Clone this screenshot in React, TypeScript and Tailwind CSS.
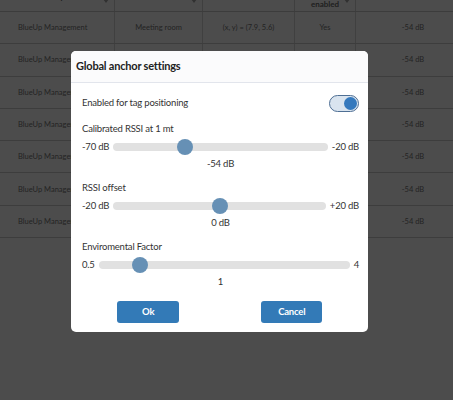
import React, { useState } from 'react';

const font = { fontFamily: 'Lato, "Open Sans", sans-serif' };

const rows = Array.from({ length: 7 }, (_, i) => ({
  map: 'BlueUp Management',
  zone: i === 0 ? 'Meeting room' : '',
  position: i === 0 ? '(x, y) = (7.9, 5.6)' : '',
  enabled: i === 0 ? 'Yes' : '',
  rssi: '-54 dB',
}));

function SortArrow() {
  return (
    <svg width="6" height="4" viewBox="0 0 6 4" className="absolute right-[5px] top-[16px]">
      <path d="M0 0h6L3 4z" fill="#a5a5a5" />
    </svg>
  );
}

function Background() {
  const cols = 'grid grid-cols-[115px_88px_92px_61px_130px]';
  return (
    <div className="w-[486px] text-[#777] text-[7.5px]" style={font}>
      <div className={`${cols} -mt-[17px] h-[29px] border-b border-[#c9c9c9] text-[#6a6a6a] font-bold text-[8px]`}>
        <div className="relative flex items-center justify-center border-r border-[#d2d2d2]">Map<SortArrow /></div>
        <div className="relative flex items-center justify-center border-r border-[#d2d2d2]">Zone<SortArrow /></div>
        <div className="flex items-center justify-center border-r border-[#d2d2d2]">Position</div>
        <div className="relative flex flex-col items-center justify-center leading-[12px] pt-[2px] border-r border-[#d2d2d2]">
          <span>Tag positioning</span>
          <span>enabled</span>
          <SortArrow />
        </div>
        <div className="flex items-center justify-center">Calibrated RSSI at 1 mt</div>
      </div>
      {rows.map((r, i) => (
        <div key={i} className={`${cols} h-[32.3px] border-b border-[#cdcdcd]`}>
          <div className="flex items-center pl-[18px] border-r border-[#d6d6d6]">{r.map}</div>
          <div className="flex items-center justify-center border-r border-[#d6d6d6]">{r.zone}</div>
          <div className="flex items-center justify-center border-r border-[#d6d6d6]">{r.position}</div>
          <div className="flex items-center justify-center border-r border-[#d6d6d6]">{r.enabled}</div>
          <div className="flex items-center justify-center pr-[16px]">{r.rssi}</div>
        </div>
      ))}
    </div>
  );
}

function Toggle({ on, onChange }: { on: boolean; onChange: (v: boolean) => void }) {
  return (
    <button
      type="button"
      onClick={() => onChange(!on)}
      className={`flex items-center w-[30px] h-[17px] rounded-full border-[1.5px] border-[#4f6f94] bg-[#d9e4ef] px-[1px] ${on ? 'justify-end' : 'justify-start'}`}
    >
      <span className="block w-[13px] h-[13px] rounded-full bg-[#3579bd]" />
    </button>
  );
}

interface SliderProps {
  label: string;
  min: number;
  max: number;
  value: number;
  left: string;
  right: string;
  display: string;
}

function Slider({ label, min, max, value, left, right, display }: SliderProps) {
  const frac = (value - min) / (max - min);
  return (
    <div className="mt-[10px]">
      <div className="h-[14px] leading-[14px]">{label}</div>
      <div className="mt-[3px] h-[16px] flex items-center gap-[4px]">
        <span>{left}</span>
        <div className="relative flex-1 h-[8px] rounded-full bg-[#e1e1e1]">
          <span
            className="absolute top-[-4px] w-[16px] h-[16px] rounded-full bg-[#6690b5]"
            style={{ left: `calc(${frac} * (100% - 16px))` }}
          />
        </div>
        <span>{right}</span>
      </div>
      <div className="mt-[2px] h-[14px] leading-[14px] text-center">{display}</div>
    </div>
  );
}

export default function App() {
  const [enabled, setEnabled] = useState(true);
  return (
    <div className="relative w-full h-[400px] overflow-hidden bg-white">
      <Background />
      <div className="absolute inset-0 bg-black/70" />
      <div
        className="absolute left-[71px] top-[51px] w-[297px] rounded-[5px] bg-white text-[9.5px] tracking-[-0.2px] text-[#333]"
        style={font}
      >
        <div className="h-[32px] flex items-center px-[5px] border-b border-[#e2e5ec] bg-[#fbfbfc] rounded-t-[5px]">
          <h2 className="text-[11px] font-bold tracking-[-0.2px] text-[#222]">Global anchor settings</h2>
        </div>
        <div className="pl-[11px] pr-[9px] pt-[12px] pb-[9px]">
          <div className="h-[17px] flex items-center justify-between">
            <span>Enabled for tag positioning</span>
            <Toggle on={enabled} onChange={setEnabled} />
          </div>
          <Slider label="Calibrated RSSI at 1 mt" min={-70} max={-20} value={-54} left="-70 dB" right="-20 dB" display="-54 dB" />
          <Slider label="RSSI offset" min={-20} max={20} value={0} left="-20 dB" right="+20 dB" display="0 dB" />
          <Slider label="Enviromental Factor" min={0.5} max={4} value={1} left="0.5" right="4" display="1" />
          <div className="mt-[12px] grid grid-cols-2 justify-items-center">
            <button type="button" className="ml-[-6px] w-[62px] h-[22px] rounded-[3px] bg-[#337ab7] text-white font-bold">
              Ok
            </button>
            <button type="button" className="ml-[4px] w-[61px] h-[22px] rounded-[3px] bg-[#337ab7] text-white font-bold">
              Cancel
            </button>
          </div>
        </div>
      </div>
    </div>
  );
}
